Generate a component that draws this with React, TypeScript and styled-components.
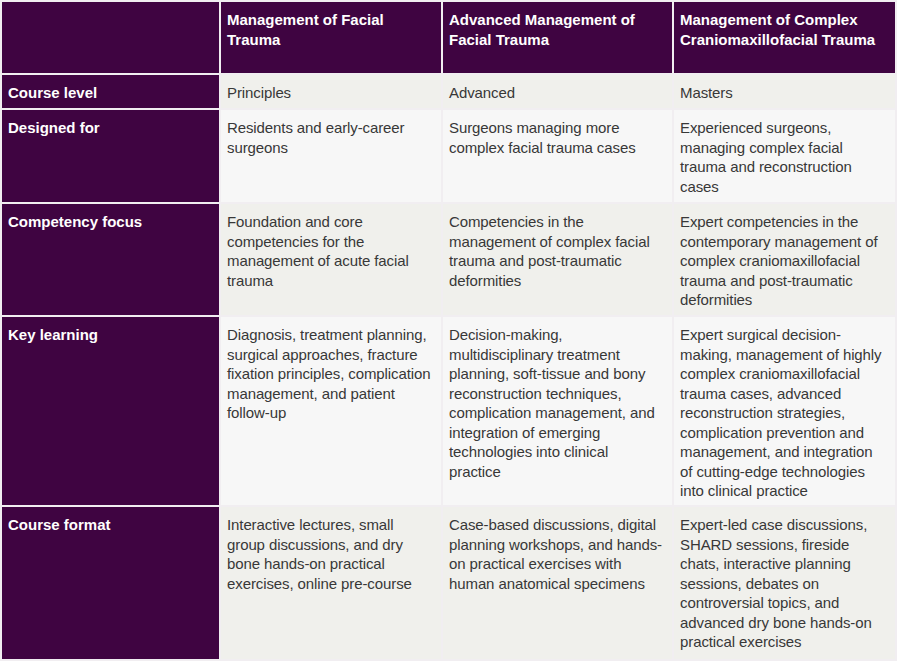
import React from "react";
import styled, { createGlobalStyle } from "styled-components";

const Global = createGlobalStyle`
  html, body { margin: 0; padding: 0; background: #ffffff; }
  body { font-family: "Liberation Sans", Arial, Helvetica, sans-serif; }
`;

const Table = styled.div`
  display: grid;
  width: 897px;
  box-sizing: border-box;
  grid-template-columns: 217px 220px 229px 221px;
  grid-template-rows: 71px 33px 92px 111px 188px 152px;
  gap: 2px;
  padding: 2px;
  background: #f1eef1;
`;

const Cell = styled.div<{ $variant: "head" | "odd" | "even" }>`
  box-sizing: border-box;
  padding: 8px 9px 0 6px;
  font-size: 15px;
  line-height: 19.5px;
  letter-spacing: ${(p) => (p.$variant === "head" ? "0" : "-0.1px")};
  background: ${(p) =>
    p.$variant === "head" ? "#3f0441" : p.$variant === "odd" ? "#f0f0ec" : "#f7f7f7"};
  color: ${(p) => (p.$variant === "head" ? "#ffffff" : "#383838")};
  font-weight: ${(p) => (p.$variant === "head" ? 700 : 400)};
`;

const columns = [
  "Management of Facial Trauma",
  "Advanced Management of Facial Trauma",
  "Management of Complex Craniomaxillofacial Trauma",
];

const rows: { label: string; values: string[] }[] = [
  { label: "Course level", values: ["Principles", "Advanced", "Masters"] },
  {
    label: "Designed for",
    values: [
      "Residents and early-career surgeons",
      "Surgeons managing more complex facial trauma cases",
      "Experienced surgeons, managing complex facial trauma and reconstruction cases",
    ],
  },
  {
    label: "Competency focus",
    values: [
      "Foundation and core competencies for the management of acute facial trauma",
      "Competencies in the management of complex facial trauma and post-traumatic deformities",
      "Expert competencies in the contemporary management of complex craniomaxillofacial trauma and post-traumatic deformities",
    ],
  },
  {
    label: "Key learning",
    values: [
      "Diagnosis, treatment planning, surgical approaches, fracture fixation principles, complication management, and patient follow-up",
      "Decision-making, multidisciplinary treatment planning, soft-tissue and bony reconstruction techniques, complication management, and integration of emerging technologies into clinical practice",
      "Expert surgical decision-making, management of highly complex craniomaxillofacial trauma cases, advanced reconstruction strategies, complication prevention and management, and integration of cutting-edge technologies into clinical practice",
    ],
  },
  {
    label: "Course format",
    values: [
      "Interactive lectures, small group discussions, and dry bone hands-on practical exercises, online pre-course",
      "Case-based discussions, digital planning workshops, and hands-on practical exercises with human anatomical specimens",
      "Expert-led case discussions, SHARD sessions, fireside chats, interactive planning sessions, debates on controversial topics, and advanced dry bone hands-on practical exercises",
    ],
  },
];

export default function App() {
  return (
    <>
      <Global />
      <Table>
        <Cell $variant="head" />
        {columns.map((c) => (
          <Cell key={c} $variant="head">
            {c}
          </Cell>
        ))}
        {rows.map((r, i) => (
          <React.Fragment key={r.label}>
            <Cell $variant="head">{r.label}</Cell>
            {r.values.map((v, j) => (
              <Cell key={j} $variant={i % 2 === 0 ? "odd" : "even"}>
                {v}
              </Cell>
            ))}
          </React.Fragment>
        ))}
      </Table>
    </>
  );
}
